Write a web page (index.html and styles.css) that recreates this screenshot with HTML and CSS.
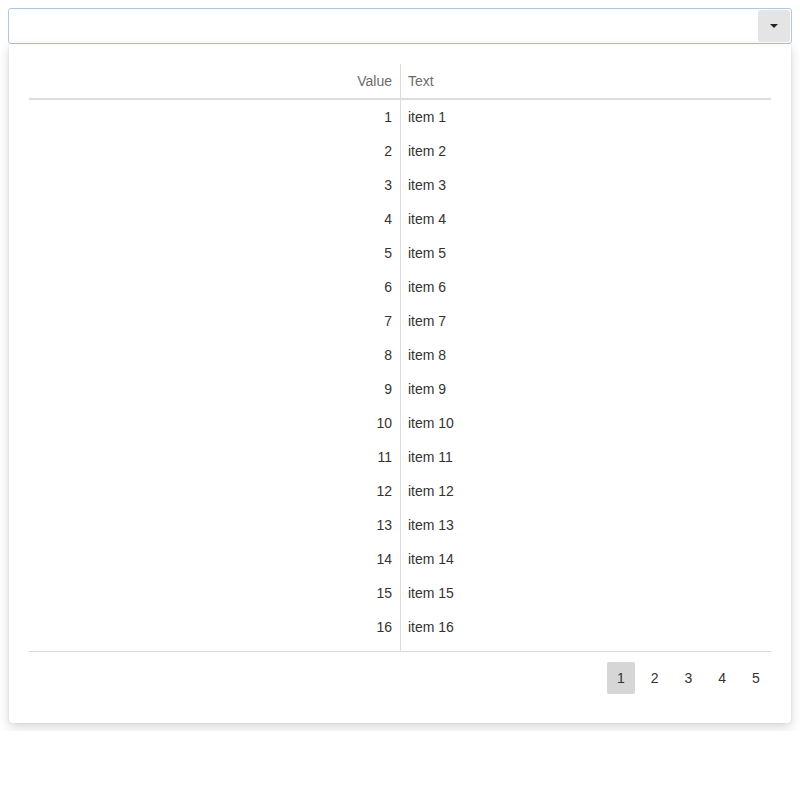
FILE: index.html
```
<!DOCTYPE html>
<html>
<head>
<meta charset="utf-8">
<link rel="stylesheet" href="styles.css">
</head>
<body>
<div class="combo">
  <div class="combo-input"></div>
  <button class="combo-btn" type="button"><span class="caret"></span></button>
</div>
<div class="popup">
  <div class="grid">
    <div class="grid-head">
      <div class="cell num head">Value</div>
      <div class="cell txt head">Text</div>
    </div>
    <div class="grid-body">
      <div class="row"><div class="cell num">1</div><div class="cell txt">item 1</div></div>
      <div class="row"><div class="cell num">2</div><div class="cell txt">item 2</div></div>
      <div class="row"><div class="cell num">3</div><div class="cell txt">item 3</div></div>
      <div class="row"><div class="cell num">4</div><div class="cell txt">item 4</div></div>
      <div class="row"><div class="cell num">5</div><div class="cell txt">item 5</div></div>
      <div class="row"><div class="cell num">6</div><div class="cell txt">item 6</div></div>
      <div class="row"><div class="cell num">7</div><div class="cell txt">item 7</div></div>
      <div class="row"><div class="cell num">8</div><div class="cell txt">item 8</div></div>
      <div class="row"><div class="cell num">9</div><div class="cell txt">item 9</div></div>
      <div class="row"><div class="cell num">10</div><div class="cell txt">item 10</div></div>
      <div class="row"><div class="cell num">11</div><div class="cell txt">item 11</div></div>
      <div class="row"><div class="cell num">12</div><div class="cell txt">item 12</div></div>
      <div class="row"><div class="cell num">13</div><div class="cell txt">item 13</div></div>
      <div class="row"><div class="cell num">14</div><div class="cell txt">item 14</div></div>
      <div class="row"><div class="cell num">15</div><div class="cell txt">item 15</div></div>
      <div class="row"><div class="cell num">16</div><div class="cell txt">item 16</div></div>
      <div class="row filler"><div class="cell num"></div><div class="cell txt"></div></div>
    </div>
  </div>
  <div class="pager">
    <span class="page active">1</span>
    <span class="page">2</span>
    <span class="page">3</span>
    <span class="page">4</span>
    <span class="page">5</span>
  </div>
</div>
</body>
</html>
```
FILE: styles.css
```
html, body {
  margin: 0;
  padding: 0;
  background: #fff;
}
body {
  padding: 8px;
  font-family: "Liberation Sans", Arial, sans-serif;
  font-size: 14px;
  color: #333;
}
.combo {
  display: flex;
  align-items: center;
  height: 34px;
  border: 1px solid #a9cbe6;
  border-radius: 3px;
  padding: 0 1px;
}
.combo-input {
  flex: 1;
}
.combo-btn {
  width: 32px;
  height: 32px;
  border: 0;
  padding: 0;
  background: #e4e4e4;
  border-radius: 3px;
  display: flex;
  align-items: center;
  justify-content: center;
}
.caret {
  width: 0;
  height: 0;
  border-left: 4px solid transparent;
  border-right: 4px solid transparent;
  border-top: 4px solid #222;
}
.popup {
  margin: 0 1px;
  padding: 20px 20px 19px;
  background: #fff;
  border-radius: 0 0 4px 4px;
  box-shadow: 0 4px 12px rgba(0, 0, 0, 0.16), 0 0 2px rgba(0, 0, 0, 0.12);
}
.grid-head {
  display: grid;
  grid-template-columns: 372px 1fr;
  border-bottom: 2px solid #dcdcdc;
}
.grid-body {
  border-bottom: 1px solid #dcdcdc;
}
.row {
  display: grid;
  grid-template-columns: 372px 1fr;
}
.cell {
  height: 34px;
  line-height: 34px;
  padding: 0 8px;
}
.txt {
  padding-left: 7px;
}
.num {
  text-align: right;
  border-right: 1px solid #dcdcdc;
}
.head {
  color: #6c6c6c;
}
.filler .cell {
  height: 7px;
}
.pager {
  display: flex;
  justify-content: flex-end;
  gap: 5.75px;
  padding: 10px 1px 10px 0;
}
.page {
  width: 28px;
  height: 32px;
  line-height: 32px;
  text-align: center;
  border-radius: 2px;
  color: #333;
}
.page.active {
  background: #d6d6d6;
}
```
